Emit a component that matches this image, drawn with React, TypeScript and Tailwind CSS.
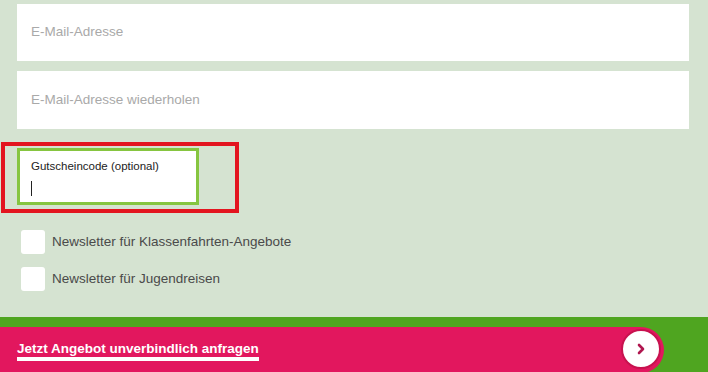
export default function App() {
  return (
    <div className="w-[708px] h-[372px] overflow-hidden bg-[#d5e3d1] flex flex-col font-['Liberation_Sans',Arial,sans-serif]">
      {/* E-Mail fields */}
      <div className="ml-[17px] mt-[4px] w-[672px] h-[57px] bg-white flex items-center px-[14px]">
        <span className="text-[13.5px] text-[#a9a9a9]">E-Mail-Adresse</span>
      </div>
      <div className="ml-[17px] mt-[10px] w-[672px] h-[58px] bg-white flex items-center px-[14px]">
        <span className="text-[13.5px] text-[#a9a9a9]">E-Mail-Adresse wiederholen</span>
      </div>

      {/* Gutscheincode, highlighted */}
      <div className="ml-[1px] mt-[13px] w-[238px] h-[71px] border-4 border-[#e3151f] pl-[12px] pt-[2px]">
        <div className="w-[182px] h-[57px] bg-white border-[3px] border-[#86c540] px-[11px] pt-[8px]">
          <div className="text-[11.5px] leading-[14px] text-[#222]">Gutscheincode (optional)</div>
          <div className="mt-[8px] w-[1px] h-[15px] bg-[#222]" />
        </div>
      </div>

      {/* Newsletter */}
      <div className="ml-[21px] mt-[17px] flex flex-col gap-[13px]">
        <label className="flex items-center gap-[7px]">
          <span className="w-[24px] h-[24px] rounded-[3px] bg-white" />
          <span className="text-[13.5px] text-[#4a4a4a]">Newsletter für Klassenfahrten-Angebote</span>
        </label>
        <label className="flex items-center gap-[7px]">
          <span className="w-[24px] h-[24px] rounded-[3px] bg-white" />
          <span className="text-[13.5px] text-[#4a4a4a]">Newsletter für Jugendreisen</span>
        </label>
      </div>

      {/* Submit bar */}
      <div className="mt-auto h-[55px] bg-[#4fa520] pt-[10px]">
        <div className="w-[664px] h-[46px] bg-[#e2175e] rounded-r-full flex items-center justify-between pl-[17px] pr-[3px]">
          <span className="text-[13.5px] font-bold text-white border-b-4 border-white leading-[15px] pb-[1px] mt-[1px]">
            Jetzt Angebot unverbindlich anfragen
          </span>
          <span className="w-[40px] h-[40px] rounded-full bg-white border-2 border-[#c8124f] flex items-center justify-center mb-[2px]">
            <svg width="10" height="12" viewBox="0 0 10 12" fill="none">
              <path d="M3 2 L7 6 L3 10" stroke="#b0164f" strokeWidth="2.6" strokeLinecap="round" strokeLinejoin="round" />
            </svg>
          </span>
        </div>
      </div>
    </div>
  )
}
